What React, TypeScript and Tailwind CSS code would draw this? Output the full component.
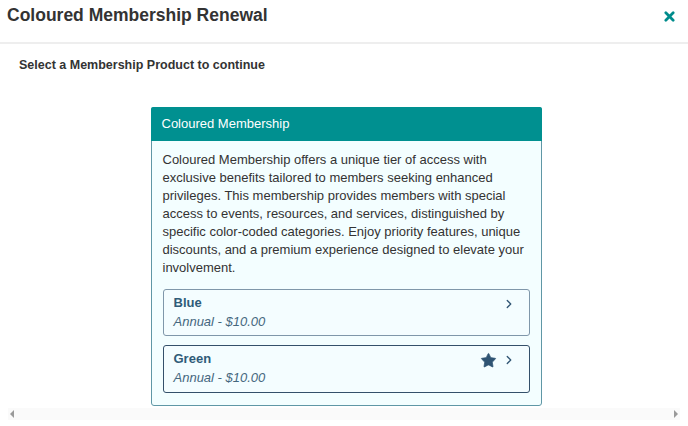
import { ChevronRight, Star } from 'lucide-react';

const products = [
  { name: 'Blue', price: 'Annual - $10.00', selected: false },
  { name: 'Green', price: 'Annual - $10.00', selected: true },
];

const App = () => {
  return (
    <div className="w-[688px] h-[426px] bg-white overflow-hidden flex flex-col" style={{ fontFamily: '"Liberation Sans", Arial, sans-serif' }}>
      {/* Modal header */}
      <div className="h-[44px] flex items-center justify-between pl-[7px] pr-[13px] border-b-2 border-[#eeeeee]">
        <h1 className="text-[17.5px] font-bold text-[#333333] leading-none -mt-[10px]">Coloured Membership Renewal</h1>
        <button className="text-[#008c8c] -mt-[10px]">
          <svg width="11" height="11" viewBox="0 0 12 12">
            <path d="M2 2 L10 10 M10 2 L2 10" stroke="currentColor" strokeWidth="3" strokeLinecap="round" />
          </svg>
        </button>
      </div>

      <p className="pl-[19px] mt-[13px] text-[12.5px] font-bold text-[#333333] leading-4">Select a Membership Product to continue</p>

      {/* Product card */}
      <div className="flex-1 flex justify-center pt-[34px]">
        <div className="w-[391px] h-[299px] border border-[#5f97a6] rounded-[3px] bg-[#f3feff] flex flex-col ml-[4px]">
          <div className="h-[34px] bg-[#009090] rounded-t-[2px] flex items-center px-[11px] -mx-px -mt-px">
            <span className="text-white text-[13px]">Coloured Membership</span>
          </div>
          <div className="px-[11px] pt-[10px]">
            <p className="text-[13px] leading-[18px] text-[#333333]">
              Coloured Membership offers a unique tier of access with exclusive benefits tailored to members seeking enhanced privileges. This membership provides members with special access to events, resources, and services, distinguished by specific color-coded categories. Enjoy priority features, unique discounts, and a premium experience designed to elevate your involvement.
            </p>
            <div className="flex flex-col gap-[9px] mt-[12px]">
              {products.map((p) => (
                <div
                  key={p.name}
                  className={
                    p.selected
                      ? 'h-[48px] rounded-[3px] border-[1.5px] border-[#34506a] bg-[#f4fdff] pl-[10px] pr-[13px] pt-[5px] flex justify-between'
                      : 'h-[47px] rounded-[3px] border border-[#7f97aa] bg-[#f4fdff] pl-[10px] pr-[13px] pt-[5px] flex justify-between'
                  }
                >
                  <div>
                    <div className="text-[13px] font-bold text-[#2f5b78] leading-[16px]">{p.name}</div>
                    <div className="text-[13px] italic text-[#45677e] leading-[18px] mt-[2px]">{p.price}</div>
                  </div>
                  <div className="flex items-start gap-[5px] pt-[1px] text-[#2f5473]">
                    {p.selected && <Star size={17} fill="currentColor" strokeWidth={1} />}
                    <ChevronRight size={14} strokeWidth={2.2} className="mt-[1px]" />
                  </div>
                </div>
              ))}
            </div>
          </div>
        </div>
      </div>

      {/* Horizontal scrollbar */}
      <div className="h-[12px] mb-[6px] mx-[8px] bg-[#fafafa] flex items-center justify-between px-[2px]">
        <span className="w-0 h-0 border-y-[4px] border-y-transparent border-r-[4px] border-r-[#9a9a9a]" />
        <span className="w-0 h-0 border-y-[4px] border-y-transparent border-l-[4px] border-l-[#9a9a9a]" />
      </div>
    </div>
  );
};

export default App;
